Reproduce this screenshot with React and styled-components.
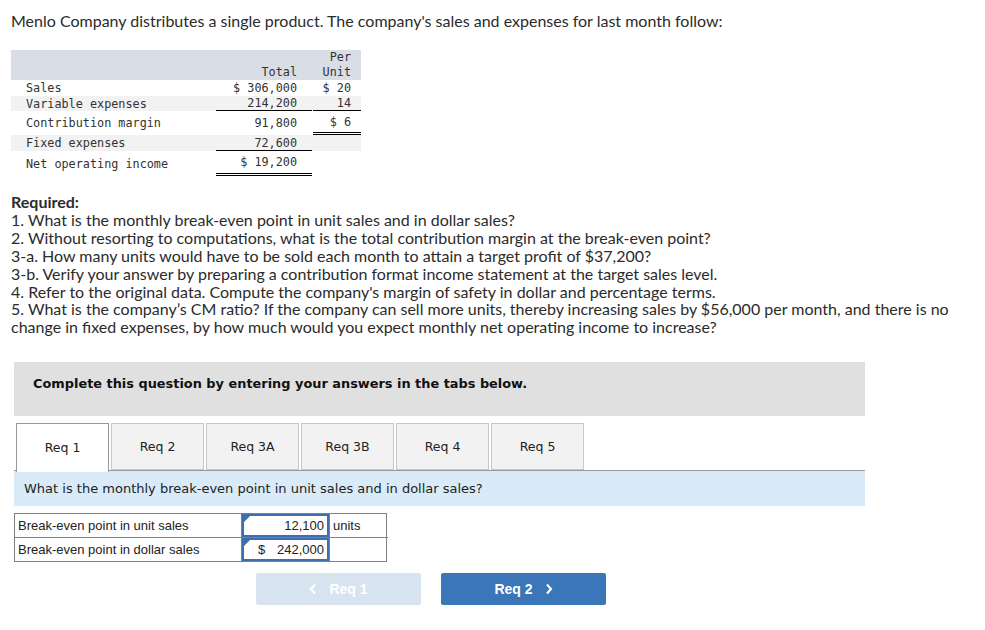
import React from "react";
import styled, { createGlobalStyle } from "styled-components";

const GlobalStyle = createGlobalStyle`
  body {
    margin: 0;
    background: #fff;
    color: #222;
  }
`;

const Page = styled.div`
  width: 985px;
  padding: 12px 0 0 11px;
  box-sizing: border-box;
`;

const Intro = styled.p`
  margin: 0;
  font-family: Lato, "Open Sans", sans-serif;
  font-size: 16px;
  line-height: 17px;
  color: #2b2b2b;
`;

const DataGrid = styled.div`
  margin-top: 21px;
  width: 350px;
  display: grid;
  grid-template-columns: 205px 96px 49px;
  font-family: "DejaVu Sans Mono", "Liberation Mono", monospace;
  font-size: 11.8px;
  color: #333;
`;

const HeadBand = styled.div`
  grid-column: 1 / 4;
  display: grid;
  grid-template-columns: 205px 96px 49px;
  height: 30px;
  background: #d9dde6;
  align-items: end;
  line-height: 15px;
`;

const Row = styled.div`
  grid-column: 1 / 4;
  display: grid;
  grid-template-columns: 205px 96px 49px;
  height: ${(p) => p.$h}px;
  background: ${(p) => (p.$shade ? "#f2f2f2" : "#fff")};
`;

const Label = styled.div`
  padding-left: 15px;
  display: flex;
  align-items: center;
`;

const Num = styled.div`
  display: flex;
  align-items: center;
  justify-content: flex-end;
  padding-right: ${(p) => (p.$unit ? 10 : 15)}px;
  margin-left: ${(p) => (p.$unit ? 1 : 0)}px;
  box-sizing: border-box;
  border-bottom: ${(p) =>
    p.$line === "double" ? "3px double #000" : p.$line === "single" ? "1.5px solid #000" : "none"};
`;

const HeadCell = styled.div`
  text-align: right;
  padding-right: ${(p) => (p.$unit ? 10 : 15)}px;
  margin-left: ${(p) => (p.$unit ? 1 : 0)}px;
`;

const Required = styled.div`
  margin-top: 17px;
  width: 962px;
  font-family: Lato, "Open Sans", sans-serif;
  font-size: 16px;
  line-height: 17.9px;
  color: #2b2b2b;
`;

const ReqTitle = styled.div`
  font-weight: 700;
`;

const Question = styled.div`
  margin: 26px 0 0 3px;
  width: 851px;
`;

const Banner = styled.div`
  height: 54px;
  box-sizing: border-box;
  padding: 14px 0 0 19px;
  background: #e0e0e0;
  font-family: "DejaVu Sans", Verdana, sans-serif;
  font-weight: 700;
  font-size: 12.9px;
  line-height: 16px;
  color: #111;
`;

const TabBar = styled.div`
  margin-top: 7px;
  display: flex;
  gap: 2px;
  padding-left: 2px;
  height: 47px;
  border-bottom: 1.5px solid #999;
`;

const Tab = styled.div`
  width: 93px;
  box-sizing: border-box;
  height: ${(p) => (p.$active ? 49 : 47)}px;
  display: flex;
  align-items: center;
  justify-content: center;
  font-family: "DejaVu Sans", Tahoma, sans-serif;
  font-size: 12.5px;
  color: #222;
  background: ${(p) => (p.$active ? "#fff" : "#f2f2f2")};
  border: 1px solid ${(p) => (p.$active ? "#999" : "#c8c8c8")};
  border-bottom: ${(p) => (p.$active ? "none" : "1px solid #c8c8c8")};
  padding-bottom: ${(p) => (p.$active ? 2 : 0)}px;
`;

const Prompt = styled.div`
  height: 35px;
  display: flex;
  align-items: center;
  padding-left: 10px;
  background: #d9ebf9;
  font-family: "DejaVu Sans", Verdana, sans-serif;
  font-size: 13px;
  color: #222;
`;

const AnswerTable = styled.div`
  margin-top: 7px;
  width: 373px;
  display: grid;
  grid-template-columns: 226px 88px 59px;
  border: 1px solid #808080;
  box-sizing: border-box;
  font-family: "Liberation Sans", Arial, sans-serif;
  font-size: 13px;
  color: #222;
`;

const Cell = styled.div`
  height: 23px;
  display: flex;
  align-items: center;
  padding-left: ${(p) => (p.$pad ? 3 : 0)}px;
  border-bottom: ${(p) => (p.$last ? "none" : "1px solid #808080")};
  border-left: ${(p) => (p.$first ? "none" : "1px solid #808080")};
`;

const InputBox = styled.div`
  position: relative;
  flex: 1;
  align-self: stretch;
  display: flex;
  align-items: center;
  justify-content: space-between;
  padding: 0 3px 0 14px;
  border: 2px solid #3d6fae;
  &::before {
    content: "";
    position: absolute;
    left: 0;
    top: 0;
    border-top: 6px solid #3d6fae;
    border-right: 6px solid transparent;
  }
`;

const Buttons = styled.div`
  margin: 11px 0 0 242px;
  display: flex;
  gap: 20px;
`;

const NavButton = styled.button`
  width: 165px;
  height: 32px;
  border: none;
  border-radius: 2px;
  display: flex;
  align-items: center;
  justify-content: center;
  gap: 12px;
  font-family: "Liberation Sans", Arial, sans-serif;
  font-weight: 700;
  font-size: 14px;
  color: #fff;
  background: ${(p) => (p.$disabled ? "#d8e3f0" : "#3a76b8")};
`;

const Chevron = ({ dir }) => (
  <svg width="8" height="12" viewBox="0 0 8 12">
    <polyline
      points={dir === "left" ? "6,1.5 2,6 6,10.5" : "2,1.5 6,6 2,10.5"}
      fill="none"
      stroke="#fff"
      strokeWidth="2.2"
    />
  </svg>
);

const rows = [
  { label: "Sales", total: "$ 306,000", unit: "$ 20", h: 16 },
  { label: "Variable expenses", total: "214,200", unit: "14", h: 15, shade: true, tl: "single", ul: "single" },
  { label: "Contribution margin", total: "91,800", unit: "$ 6", h: 24, ul: "double" },
  { label: "Fixed expenses", total: "72,600", unit: "", h: 16, shade: true, tl: "single" },
  { label: "Net operating income", total: "$ 19,200", unit: "", h: 25, tl: "double" },
];

const questions = [
  "1. What is the monthly break-even point in unit sales and in dollar sales?",
  "2. Without resorting to computations, what is the total contribution margin at the break-even point?",
  "3-a. How many units would have to be sold each month to attain a target profit of $37,200?",
  "3-b. Verify your answer by preparing a contribution format income statement at the target sales level.",
  "4. Refer to the original data. Compute the company's margin of safety in dollar and percentage terms.",
  "5. What is the company’s CM ratio? If the company can sell more units, thereby increasing sales by $56,000 per month, and there is no change in fixed expenses, by how much would you expect monthly net operating income to increase?",
];

const tabs = ["Req 1", "Req 2", "Req 3A", "Req 3B", "Req 4", "Req 5"];

export default function App() {
  return (
    <Page>
      <GlobalStyle />
      <Intro>Menlo Company distributes a single product. The company's sales and expenses for last month follow:</Intro>

      <DataGrid>
        <HeadBand>
          <div />
          <HeadCell>Total</HeadCell>
          <HeadCell $unit>
            Per
            <br />
            Unit
          </HeadCell>
        </HeadBand>
        {rows.map((r) => (
          <Row key={r.label} $h={r.h} $shade={r.shade}>
            <Label>{r.label}</Label>
            <Num $line={r.tl}>{r.total}</Num>
            <Num $unit $line={r.ul}>
              {r.unit}
            </Num>
          </Row>
        ))}
      </DataGrid>

      <Required>
        <ReqTitle>Required:</ReqTitle>
        {questions.map((q) => (
          <div key={q}>{q}</div>
        ))}
      </Required>

      <Question>
        <Banner>Complete this question by entering your answers in the tabs below.</Banner>
        <TabBar>
          {tabs.map((t, i) => (
            <Tab key={t} $active={i === 0}>
              {t}
            </Tab>
          ))}
        </TabBar>
        <Prompt>What is the monthly break-even point in unit sales and in dollar sales?</Prompt>

        <AnswerTable>
          <Cell $first $pad>Break-even point in unit sales</Cell>
          <Cell>
            <InputBox>
              <span />
              <span>12,100</span>
            </InputBox>
          </Cell>
          <Cell $pad>units</Cell>
          <Cell $first $pad $last>Break-even point in dollar sales</Cell>
          <Cell $last>
            <InputBox>
              <span>$</span>
              <span>242,000</span>
            </InputBox>
          </Cell>
          <Cell $last />
        </AnswerTable>

        <Buttons>
          <NavButton $disabled>
            <Chevron dir="left" />
            Req 1
          </NavButton>
          <NavButton>
            Req 2
            <Chevron dir="right" />
          </NavButton>
        </Buttons>
      </Question>
    </Page>
  );
}
